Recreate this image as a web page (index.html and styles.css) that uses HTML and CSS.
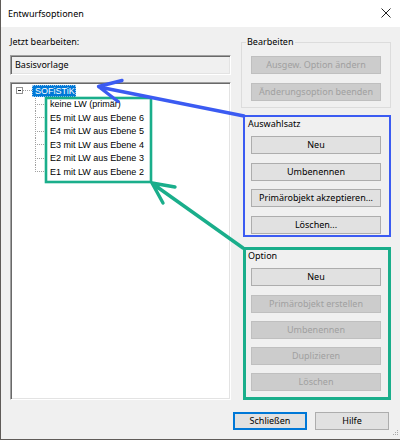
FILE: index.html
```html
<!DOCTYPE html>
<html lang="de">
<head>
<meta charset="utf-8">
<title>Entwurfsoptionen</title>
<link rel="stylesheet" href="styles.css">
</head>
<body>
<div class="window">
  <div class="titlebar">
    <span class="title">Entwurfsoptionen</span>
    <svg class="close" width="10" height="10" viewBox="0 0 10 10"><path d="M0.5 0.5L9.5 9.5M9.5 0.5L0.5 9.5" stroke="#222" stroke-width="1"/></svg>
  </div>
  <div class="content">
    <div class="left">
      <div class="label">Jetzt bearbeiten:</div>
      <div class="textbox">Basisvorlage</div>
      <div class="tree">
        <div class="row root"><span class="expander"></span><span class="connector"></span><span class="node selected">SOFiSTiK</span></div>
        <div class="row child"><span class="branch"></span><span class="node">keine LW (primär)</span></div>
        <div class="row child"><span class="branch"></span><span class="node">E5 mit LW aus Ebene 6</span></div>
        <div class="row child"><span class="branch"></span><span class="node">E4 mit LW aus Ebene 5</span></div>
        <div class="row child"><span class="branch"></span><span class="node">E3 mit LW aus Ebene 4</span></div>
        <div class="row child"><span class="branch"></span><span class="node">E2 mit LW aus Ebene 3</span></div>
        <div class="row child last"><span class="branch"></span><span class="node">E1 mit LW aus Ebene 2</span></div>
      </div>
    </div>
    <div class="right">
      <div class="group">
        <div class="group-title">Bearbeiten</div>
        <div class="btns btns-edit">
          <button class="btn" disabled>Ausgew. Option ändern</button>
          <button class="btn" disabled>Änderungsoption beenden</button>
        </div>
      </div>
      <div class="box box-blue">
        <div class="box-title">Auswahlsatz</div>
        <div class="btns btns-set">
          <button class="btn">Neu</button>
          <button class="btn">Umbenennen</button>
          <button class="btn">Primärobjekt akzeptieren...</button>
          <button class="btn">Löschen...</button>
        </div>
      </div>
      <div class="box box-green">
        <div class="box-title">Option</div>
        <div class="btns btns-opt">
          <button class="btn">Neu</button>
          <button class="btn" disabled>Primärobjekt erstellen</button>
          <button class="btn" disabled>Umbenennen</button>
          <button class="btn" disabled>Duplizieren</button>
          <button class="btn" disabled>Löschen</button>
        </div>
      </div>
    </div>
  </div>
  <div class="footer">
    <button class="btn btn-foot btn-default">Schließen</button>
    <button class="btn btn-foot">Hilfe</button>
  </div>
  <svg class="grip" width="8" height="8" viewBox="0 0 8 8">
    <g fill="#a8a8a8"><rect x="6" y="0" width="1" height="1"/><rect x="4" y="2" width="1" height="1"/><rect x="6" y="2" width="1" height="1"/><rect x="2" y="4" width="1" height="1"/><rect x="4" y="4" width="1" height="1"/><rect x="6" y="4" width="1" height="1"/></g>
  </svg>
  <svg class="annot" width="400" height="440" viewBox="0 0 400 440">
    <g fill="none" stroke-linecap="round" stroke-linejoin="round">
      <rect x="46" y="98" width="105" height="84" stroke="#1aae8b" stroke-width="2.6" stroke-linecap="butt" stroke-linejoin="miter"/>
      <path d="M244 116 L99 87 M122 80.5 L98.5 86.5 L118 101.5" stroke="#3b5bf2" stroke-width="3.4"/>
      <path d="M243 248 L153 184 M175 187 L152 183 L163 203" stroke="#1aae8b" stroke-width="3.4"/>
    </g>
  </svg>
</div>
</body>
</html>
```
FILE: styles.css
```css
html, body {
  margin: 0;
  padding: 0;
  background: #f0f0f0;
}
body {
  font-family: "Noto Sans", "Open Sans", sans-serif;
  font-size: 9px;
  color: #000;
}
.window {
  position: relative;
  width: 400px;
  height: 440px;
  box-sizing: border-box;
  background: #f0f0f0;
  border-left: 1px solid #5f5b58;
  border-bottom: 1px solid #5f5b58;
  display: flex;
  flex-direction: column;
  overflow: hidden;
}
.titlebar {
  flex: none;
  height: 27px;
  background: #fff;
  display: flex;
  align-items: center;
  justify-content: space-between;
  padding: 0 9px 0 7px;
}
.title {
  line-height: 12px;
}
.close {
  display: block;
  margin-bottom: 2px;
}
.content {
  flex: none;
  display: grid;
  grid-template-columns: 221px 150px;
  column-gap: 10px;
  padding-left: 9px;
  height: 373px;
}
.left {
  display: flex;
  flex-direction: column;
}
.label {
  margin-top: 9px;
  height: 12px;
  line-height: 12px;
}
.textbox,
.tree {
  box-sizing: border-box;
  border-top: 1px solid #a0a0a0;
  border-left: 1px solid #a0a0a0;
  border-right: 1px solid #ffffff;
  border-bottom: 1px solid #ffffff;
  box-shadow: inset 1px 1px 0 #696969, inset -1px -1px 0 #e3e3e3;
}
.textbox {
  margin-top: 7px;
  height: 20px;
  padding-left: 4px;
  line-height: 18px;
  background: #f0f0f0;
}
.tree {
  margin-top: 7px;
  flex: 1;
  background: #fff;
  padding: 1px;
  font-family: "Liberation Sans", Arial, sans-serif;
  font-size: 9px;
}
.row {
  display: flex;
  align-items: center;
  height: 13.5px;
  white-space: nowrap;
}
.root {
  padding-left: 4px;
}
.expander {
  flex: none;
  width: 7px;
  height: 7px;
  box-sizing: border-box;
  border: 1px solid #919191;
  background: linear-gradient(#222, #222) center / 3px 1px no-repeat, #fff;
}
.connector {
  flex: none;
  width: 9px;
  height: 1px;
  background: repeating-linear-gradient(to right, #a0a0a0 0 1px, transparent 1px 2px);
}
.node {
  line-height: 12px;
  height: 12px;
  padding: 0 1px 0 3px;
}
.selected {
  background: #0078d7;
  color: #fff;
  outline: 1px dotted #9cc8ee;
  outline-offset: -1px;
}
.child {
  padding-left: 23px;
}
.branch {
  flex: none;
  align-self: stretch;
  width: 12px;
  background:
    repeating-linear-gradient(to bottom, #a0a0a0 0 1px, transparent 1px 2px) left top / 1px 100% no-repeat,
    repeating-linear-gradient(to right, #a0a0a0 0 1px, transparent 1px 2px) left 6px / 100% 1px no-repeat;
}
.last .branch {
  background:
    repeating-linear-gradient(to bottom, #a0a0a0 0 1px, transparent 1px 2px) left top / 1px 7px no-repeat,
    repeating-linear-gradient(to right, #a0a0a0 0 1px, transparent 1px 2px) left 6px / 100% 1px no-repeat;
}
.right {
  display: flex;
  flex-direction: column;
}
.group {
  margin-top: 15px;
  height: 66px;
  box-sizing: border-box;
  border: 1px solid #dcdcdc;
}
.group-title {
  margin: -7px 0 0 4px;
  padding: 0 1px;
  width: fit-content;
  line-height: 12px;
  height: 12px;
  background: #f0f0f0;
}
.btns {
  display: flex;
  flex-direction: column;
}
.btns-edit {
  margin: 8px 9px 0 9px;
  gap: 9px;
}
.box {
  box-sizing: border-box;
  margin-left: 2px;
}
.box-blue {
  margin-top: 7px;
  height: 122px;
  border: 2px solid #3b5bf2;
  padding: 1px 8px 0 6px;
}
.box-green {
  margin-top: 10px;
  height: 153px;
  border: 3px solid #1aae8b;
  padding: 0 7px 0 5px;
}
.box-title {
  line-height: 12px;
  height: 12px;
  margin-left: -3px;
}
.box-green .box-title {
  margin-left: -3px;
}
.btns-set {
  margin-top: 6px;
  gap: 8.67px;
}
.btns-opt {
  margin-top: 6.3px;
  gap: 8.25px;
}
.btn {
  font-family: "Noto Sans", "Open Sans", sans-serif;
  font-size: 9px;
  color: #000;
  height: 18px;
  margin: 0;
  padding: 0;
  box-sizing: border-box;
  border: 1px solid #adadad;
  background: #e1e1e1;
  line-height: 14px;
  white-space: nowrap;
}
.btn:disabled {
  background: #cccccc;
  border-color: #bfbfbf;
  color: #a0a0a0;
}
.footer {
  flex: none;
  display: flex;
  justify-content: flex-end;
  gap: 8px;
  margin-top: 11.5px;
  padding-right: 11px;
}
.btn-foot {
  width: 74px;
}
.btn-default {
  border: 2px solid #0078d7;
}
.grip {
  position: absolute;
  right: 1px;
  bottom: 1px;
}
.annot {
  position: absolute;
  left: -1px;
  top: 0;
  pointer-events: none;
}
```
